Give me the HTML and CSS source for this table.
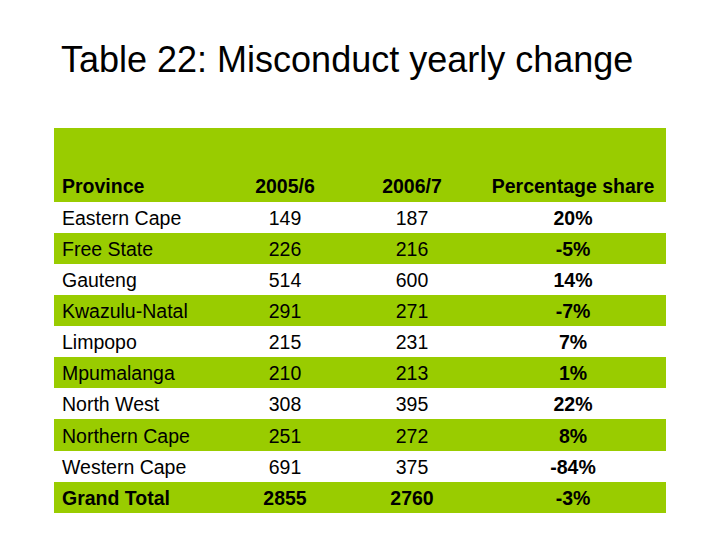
FILE: index.html
```html
<!DOCTYPE html>
<html>
<head>
<meta charset="utf-8">
<link rel="stylesheet" href="styles.css">
</head>
<body>
<div class="slide">
  <h1 class="title">Table 22: Misconduct yearly change</h1>
  <table class="data">
    <colgroup>
      <col class="c1"><col class="c2"><col class="c3"><col class="c4">
    </colgroup>
    <thead>
      <tr class="head">
        <th class="left">Province</th>
        <th>2005/6</th>
        <th>2006/7</th>
        <th>Percentage share</th>
      </tr>
    </thead>
    <tbody>
      <tr class="w"><td class="left">Eastern Cape</td><td>149</td><td>187</td><td class="pct">20%</td></tr>
      <tr class="g"><td class="left">Free State</td><td>226</td><td>216</td><td class="pct">-5%</td></tr>
      <tr class="w"><td class="left">Gauteng</td><td>514</td><td>600</td><td class="pct">14%</td></tr>
      <tr class="g"><td class="left">Kwazulu-Natal</td><td>291</td><td>271</td><td class="pct">-7%</td></tr>
      <tr class="w"><td class="left">Limpopo</td><td>215</td><td>231</td><td class="pct">7%</td></tr>
      <tr class="g"><td class="left">Mpumalanga</td><td>210</td><td>213</td><td class="pct">1%</td></tr>
      <tr class="w"><td class="left">North West</td><td>308</td><td>395</td><td class="pct">22%</td></tr>
      <tr class="g"><td class="left">Northern Cape</td><td>251</td><td>272</td><td class="pct">8%</td></tr>
      <tr class="w"><td class="left">Western Cape</td><td>691</td><td>375</td><td class="pct">-84%</td></tr>
      <tr class="g total"><td class="left">Grand Total</td><td>2855</td><td>2760</td><td class="pct">-3%</td></tr>
    </tbody>
  </table>
</div>
</body>
</html>
```
FILE: styles.css
```css
html, body {
  margin: 0;
  padding: 0;
  background: #ffffff;
}
.slide {
  width: 720px;
  height: 540px;
  padding: 39px 0 0 54px;
  box-sizing: border-box;
  font-family: "Liberation Sans", Arial, sans-serif;
  color: #000;
}
.title {
  margin: 0 0 0 7px;
  font-size: 36px;
  font-weight: normal;
  line-height: 41px;
  height: 89px;
}
.data {
  border-collapse: collapse;
  border-spacing: 0;
  width: 612px;
  table-layout: fixed;
  font-size: 19.5px;
}
.c1 { width: 172px; }
.c2 { width: 118px; }
.c3 { width: 136px; }
.c4 { width: 186px; }
.data th, .data td {
  padding: 0;
  text-align: center;
  white-space: nowrap;
  line-height: 22px;
}
.data .left {
  text-align: left;
  padding-left: 8px;
}
.head {
  background: #99cc00;
  height: 73.5px;
}
.head th {
  vertical-align: bottom;
  padding-bottom: 5px;
  font-weight: bold;
}
.data tbody tr {
  height: 31.15px;
}
.data tbody td {
  vertical-align: middle;
  padding-top: 1px;
}
.w { background: #ffffff; }
.g { background: #99cc00; }
.pct { font-weight: bold; }
.total td { font-weight: bold; }
```
